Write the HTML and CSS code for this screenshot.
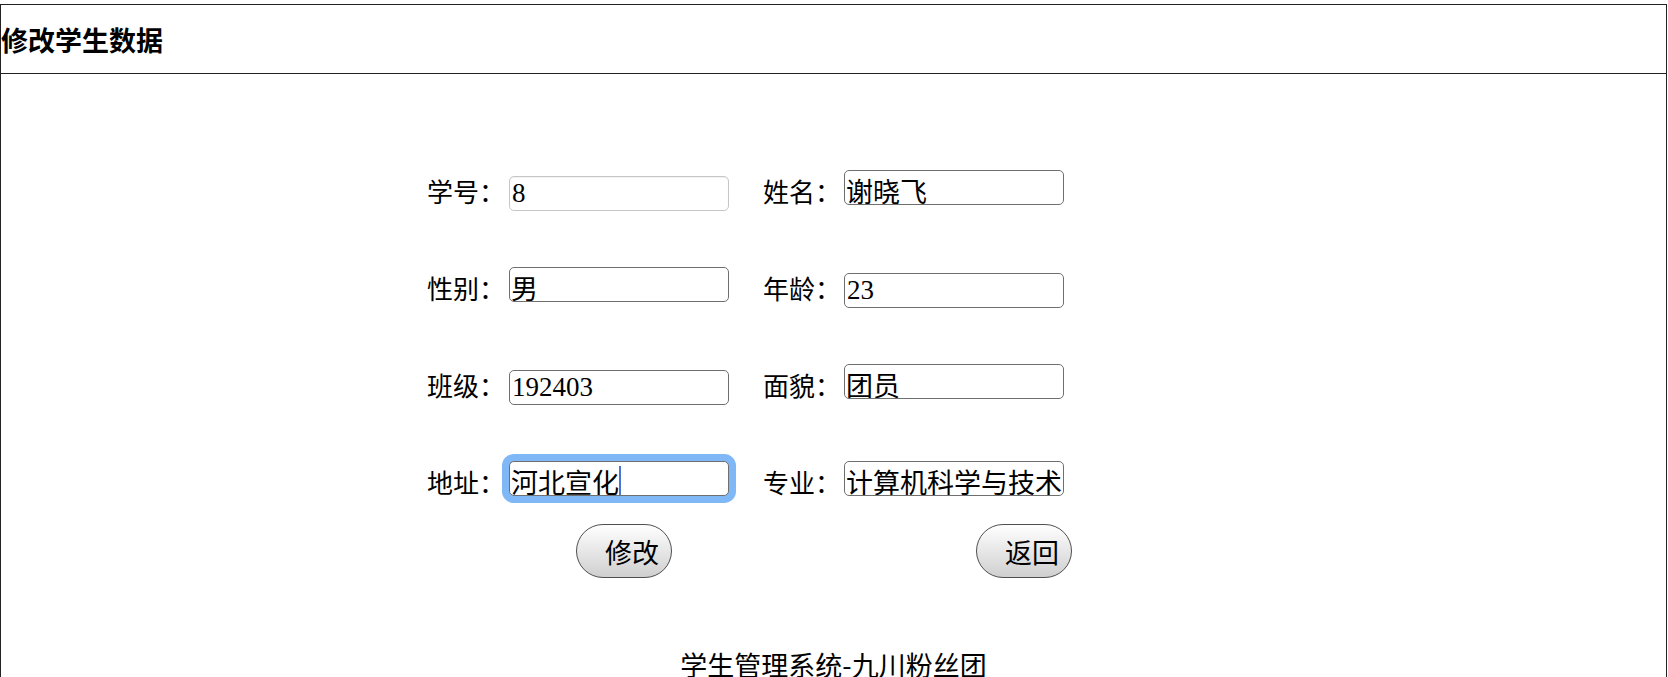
FILE: index.html
```html
<!DOCTYPE html>
<html lang="zh-CN">
<head>
<meta charset="utf-8">
<title>修改学生数据</title>
<link rel="stylesheet" href="styles.css">
</head>
<body>
<div class="page">
  <div class="header">修改学生数据</div>
  <form class="form">
    <div class="row">
      <span class="label">学号：</span>
      <input class="field readonly" type="text" value="8" readonly>
      <span class="label label2">姓名：</span>
      <input class="field cjk" type="text" value="谢晓飞">
    </div>
    <div class="row">
      <span class="label">性别：</span>
      <input class="field cjk" type="text" value="男">
      <span class="label label2">年龄：</span>
      <input class="field" type="text" value="23">
    </div>
    <div class="row">
      <span class="label">班级：</span>
      <input class="field" type="text" value="192403">
      <span class="label label2">面貌：</span>
      <input class="field cjk" type="text" value="团员">
    </div>
    <div class="row">
      <span class="label">地址：</span>
      <span class="focus-wrap"><input class="field cjk focused" type="text" value="河北宣化"><span class="caret"></span></span>
      <span class="label label2">专业：</span>
      <input class="field cjk" type="text" value="计算机科学与技术">
    </div>
    <div class="buttons">
      <button class="btn" type="button">修改</button>
      <button class="btn" type="button">返回</button>
    </div>
  </form>
  <div class="footer">学生管理系统-九川粉丝团</div>
</div>
</body>
</html>
```

FILE: styles.css
```css
* { box-sizing: border-box; }
body {
  margin: 4px 0 0 0;
  font-family: "Liberation Serif", "Noto Sans CJK SC", serif;
  color: #000;
  background: #fff;
}
.page {
  width: 1667px;
  border: 1px solid #222;
  border-bottom: none;
  min-height: 700px;
}
.header {
  height: 69px;
  border-bottom: 1px solid #222;
  display: flex;
  align-items: center;
  padding-left: 0;
  font-family: "Noto Sans CJK SC", sans-serif;
  font-weight: bold;
  font-size: 27px;
}
.form {
  padding-top: 96px;
}
.row {
  display: flex;
  align-items: baseline;
  height: 97px;
  padding-left: 426px;
}
.label {
  width: 82px;
  font-size: 26px;
  font-family: "Noto Sans CJK SC", sans-serif;
}
.label2 {
  margin-left: 34px;
  width: 81px;
}
.field {
  width: 220px;
  height: 35px;
  font-family: "Liberation Serif", "Noto Sans CJK SC", serif;
  font-size: 27px;
  border: 1px solid #6f6f6f;
  border-radius: 5px;
  padding: 1px 2px;
  margin: 0;
  color: #000;
  background: #fff;
  outline: none;
}
.cjk {
  padding: 5px 1px 0 1px;
}
.readonly {
  border-color: #c6c6c6;
  box-shadow: inset 0 1px 1px rgba(0,0,0,0.06);
}
.focus-wrap {
  position: relative;
  display: inline-block;
}
.focused {
  box-shadow: 0 0 0 7px #80b7f6;
}
.caret {
  position: absolute;
  left: 110px;
  top: 5px;
  width: 2px;
  height: 29px;
  background: #4a74d6;
}
.buttons {
  display: flex;
  gap: 304px;
  padding-left: 575px;
  margin-top: -34px;
}
.btn {
  width: 96px;
  height: 54px;
  border: 1px solid #4f4f4f;
  border-radius: 27px;
  background: linear-gradient(#ffffff, #cfcfcf);
  font-family: "Noto Sans CJK SC", sans-serif;
  font-size: 27px;
  padding: 0 12px 0 28px;
  color: #000;
  white-space: nowrap;
}
.footer {
  margin-top: 67px;
  text-align: center;
  font-family: "Noto Sans CJK SC", sans-serif;
  font-size: 27px;
}
```
